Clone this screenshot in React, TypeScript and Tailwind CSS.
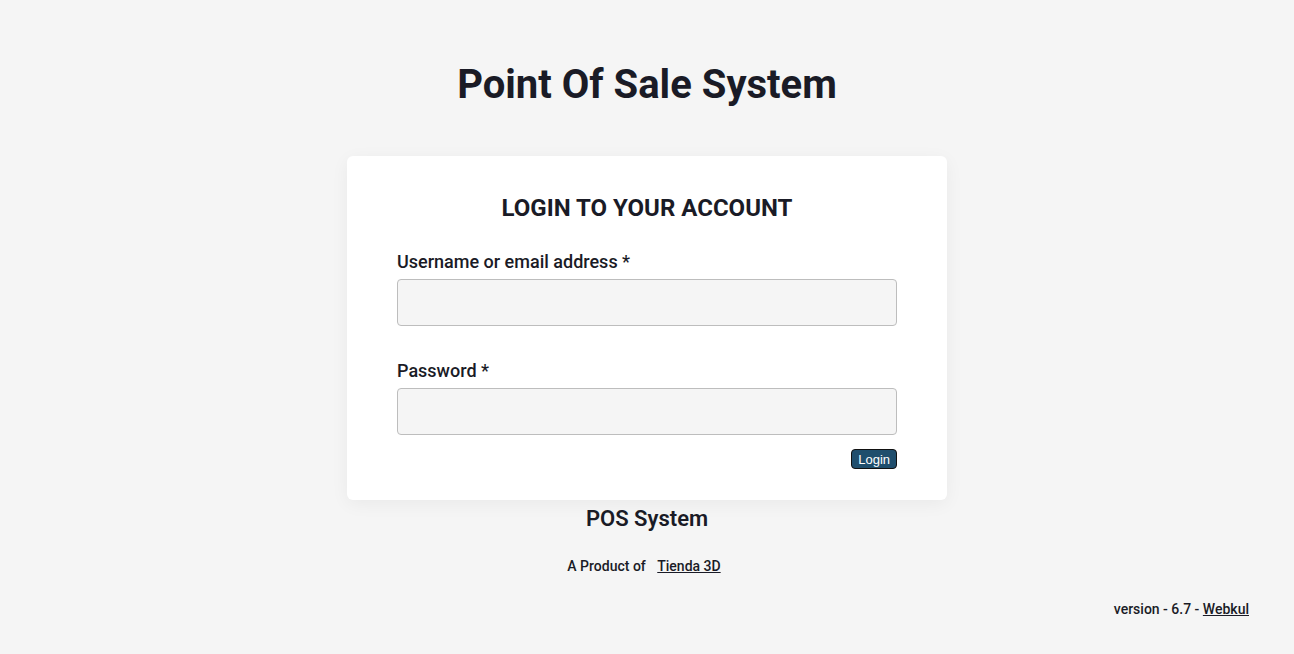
export default function App() {
	return (
		<div className="flex min-h-[654px] flex-col items-center bg-[#f5f5f5] font-['Roboto',sans-serif] text-[#1a1b26]">
			<h1 className="mt-[60px] text-[40px] font-bold leading-[50px]">Point Of Sale System</h1>

			<div className="mt-[46px] w-[600px] rounded-md bg-white px-[50px] pt-[38px] pb-[31px] shadow-[0_4px_18px_rgba(0,0,0,0.05)]">
				<h2 className="text-center text-[24px] font-bold leading-7">LOGIN TO YOUR ACCOUNT</h2>

				<label className="mt-[28px] block text-[18px] font-medium leading-6">Username or email address *</label>
				<input className="mt-[5px] block h-[47px] w-full rounded-[4px] border border-[#bdbdbd] bg-[#f5f5f5] px-3 outline-none" />

				<label className="mt-[33px] block text-[18px] font-medium leading-6">Password *</label>
				<input type="password" className="mt-[5px] block h-[47px] w-full rounded-[4px] border border-[#bdbdbd] bg-[#f5f5f5] px-3 outline-none" />

				<div className="mt-[14px] flex justify-end">
					<button className="h-[20px] rounded-[4px] border border-[#111] bg-[#1f4e6d] px-[6px] font-['Liberation_Sans',sans-serif] text-[13px] leading-none text-white">
						Login
					</button>
				</div>
			</div>

			<div className="mt-[5px] text-[22px] font-semibold leading-7">POS System</div>
			<div className="mt-[23px] pr-[6px] text-[14px] font-medium leading-5">
				A Product of <a className="ml-[8px] underline" href="#">Tienda 3D</a>
			</div>

			<div className="mt-[23px] self-end pr-[45px] text-[14px] font-medium leading-5">
				version - 6.7 - <a className="underline" href="#">Webkul</a>
			</div>
		</div>
	);
}
